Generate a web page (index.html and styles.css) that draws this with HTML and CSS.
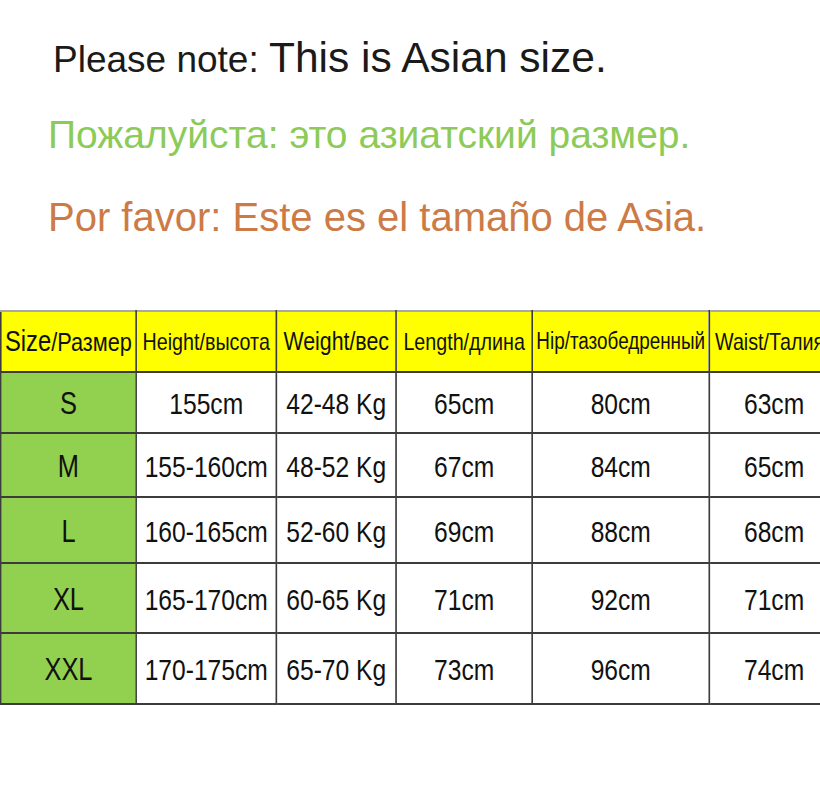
FILE: index.html
```html
<!DOCTYPE html>
<html lang="en">
<head>
<meta charset="utf-8">
<title>Size chart</title>
<link rel="stylesheet" href="styles.css">
</head>
<body>
<div class="page">
  <div class="notes">
    <p class="note note-en"><span class="small">Please note: </span><span class="big">This is Asian size.</span></p>
    <p class="note note-ru">Пожалуйста: это азиатский размер.</p>
    <p class="note note-es">Por favor: Este es el tamaño de Asia.</p>
  </div>
  <div class="table-wrap">
    <table class="sizes">
      <colgroup>
        <col class="c1"><col class="c2"><col class="c3"><col class="c4"><col class="c5"><col class="c6">
      </colgroup>
      <thead>
        <tr>
          <th class="first"><span class="size-word">Size</span><span class="size-ru">/Размер</span></th>
          <th>Height/высота</th>
          <th class="weight">Weight/вес</th>
          <th>Length/длина</th>
          <th class="hip">Hip/тазобедренный</th>
          <th class="last">Waist/Талия</th>
        </tr>
      </thead>
      <tbody>
        <tr><td class="sz">S</td><td>155cm</td><td>42-48 Kg</td><td>65cm</td><td>80cm</td><td>63cm</td></tr>
        <tr><td class="sz">M</td><td>155-160cm</td><td>48-52 Kg</td><td>67cm</td><td>84cm</td><td>65cm</td></tr>
        <tr><td class="sz">L</td><td>160-165cm</td><td>52-60 Kg</td><td>69cm</td><td>88cm</td><td>68cm</td></tr>
        <tr><td class="sz">XL</td><td>165-170cm</td><td>60-65 Kg</td><td>71cm</td><td>92cm</td><td>71cm</td></tr>
        <tr><td class="sz">XXL</td><td>170-175cm</td><td>65-70 Kg</td><td>73cm</td><td>96cm</td><td>74cm</td></tr>
      </tbody>
    </table>
  </div>
</div>
</body>
</html>
```

FILE: styles.css
```css
html, body {
  margin: 0;
  padding: 0;
  background: #ffffff;
  overflow: hidden;
}

.page {
  width: 820px;
  height: 800px;
  overflow: hidden;
  font-family: "Liberation Sans", Arial, sans-serif;
}

.notes {
  display: flex;
  flex-direction: column;
  padding-top: 37px;
}

.note {
  margin: 0;
  line-height: 42px;
  height: 42px;
  white-space: nowrap;
}

.note-en {
  padding-left: 53px;
  color: #1a1a1a;
}

.note-en .small {
  font-size: 37px;
}

.note-en .big {
  font-size: 42.5px;
}

.note-ru {
  margin-top: 35px;
  padding-left: 48px;
  font-size: 39px;
  color: #8ccb58;
}

.note-es {
  margin-top: 40px;
  padding-left: 48px;
  font-size: 40px;
  color: #cc7b46;
}

.table-wrap {
  margin-top: 72px;
  width: 820px;
  overflow: hidden;
}

/* The chart uses a narrow face: Liberation Sans compressed horizontally */
.sizes {
  border-collapse: collapse;
  table-layout: fixed;
  width: 1022px;
  transform: scaleX(0.82);
  transform-origin: 0 0;
  font-family: "Liberation Sans", Arial, sans-serif;
  color: #111111;
}

.c1 { width: 165px; }
.c2 { width: 171px; }
.c3 { width: 146px; }
.c4 { width: 166px; }
.c5 { width: 216px; }
.c6 { width: 158px; }

.sizes th,
.sizes td {
  border: 2px solid #3c3c3c;
  padding: 0;
  text-align: center;
  vertical-align: middle;
  white-space: nowrap;
  overflow: hidden;
}

.sizes th {
  background: #ffff00;
  font-weight: normal;
  font-size: 24px;
  border-top-color: #a8a8a8;
}

.sizes th.first {
  text-align: left;
  padding-left: 4px;
}

.sizes th.weight {
  font-size: 26px;
}

.sizes th.hip {
  font-size: 23px;
}

.sizes th.last {
  text-align: left;
  padding-left: 6px;
}

.size-word {
  font-size: 29px;
}

.size-ru {
  font-size: 26.5px;
}

.sizes td {
  background: #ffffff;
  font-size: 30px;
  padding-top: 3px;
}

.sizes td.sz {
  background: #92d050;
  font-size: 31px;
}

.sizes thead tr { height: 61px; }
.sizes tbody tr:nth-child(1) { height: 61px; }
.sizes tbody tr:nth-child(2) { height: 64px; }
.sizes tbody tr:nth-child(3) { height: 66px; }
.sizes tbody tr:nth-child(4) { height: 70px; }
.sizes tbody tr:nth-child(5) { height: 71px; }
```
